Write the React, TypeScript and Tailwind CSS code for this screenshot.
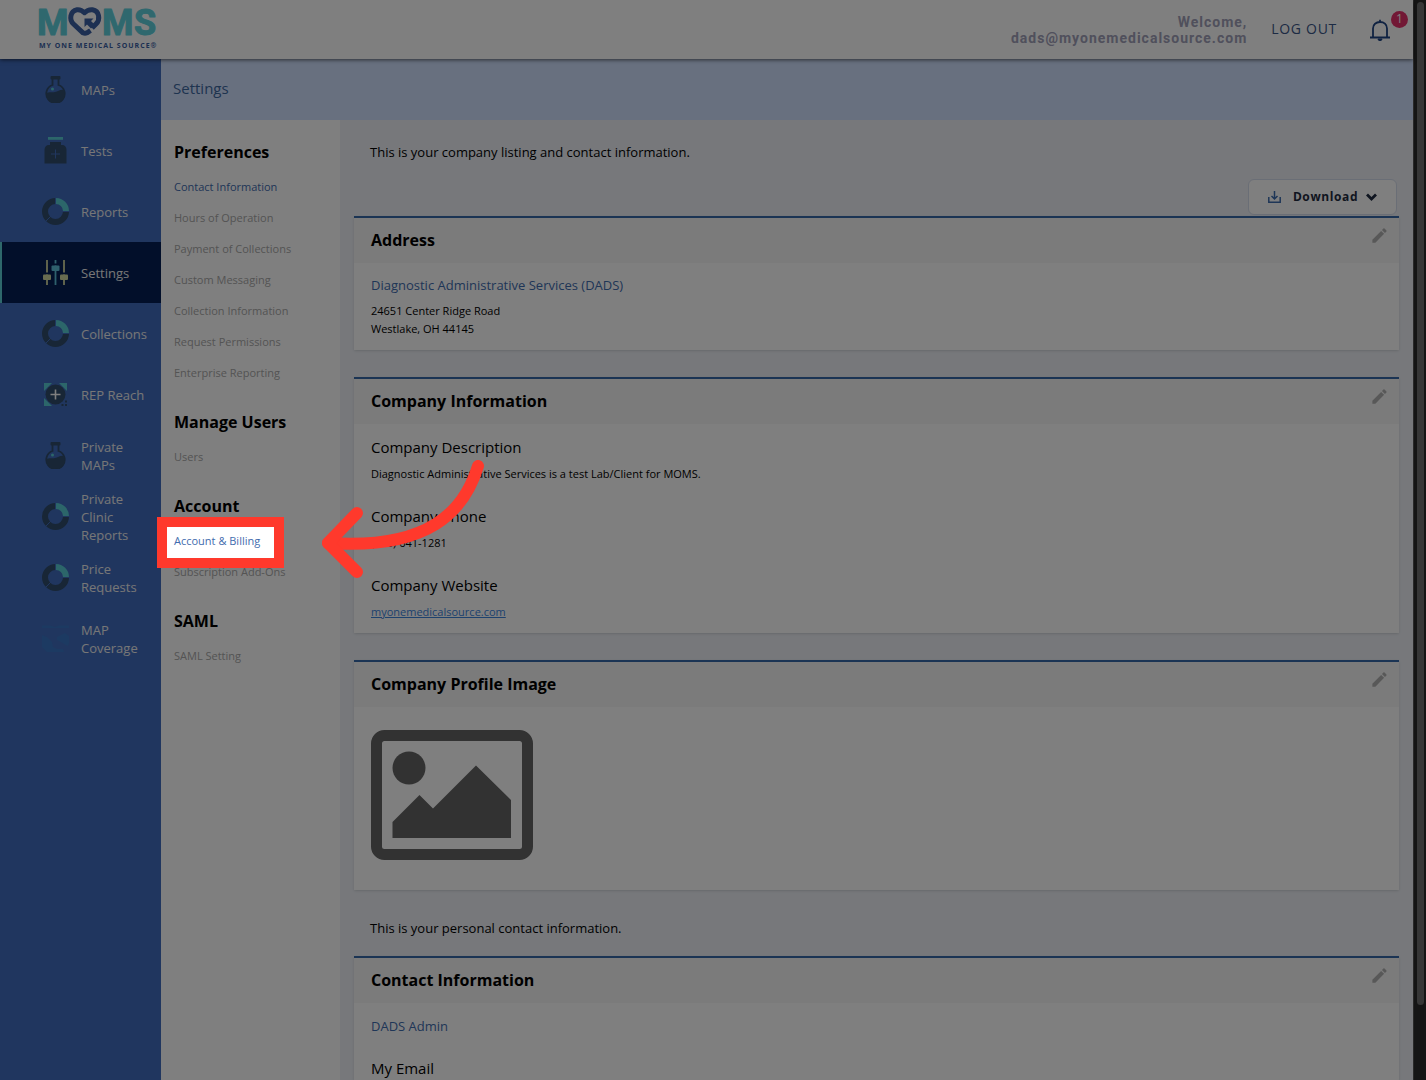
import React from "react";
import { clsx } from "clsx";
import { MdEdit } from "react-icons/md";

type IconName = "flask" | "bottle" | "donut" | "sliders" | "reach" | "map";

const sideItems: { label: string; icon: IconName; active?: boolean }[] = [
  { label: "MAPs", icon: "flask" },
  { label: "Tests", icon: "bottle" },
  { label: "Reports", icon: "donut" },
  { label: "Settings", icon: "sliders", active: true },
  { label: "Collections", icon: "donut" },
  { label: "REP Reach", icon: "reach" },
  { label: "Private MAPs", icon: "flask" },
  { label: "Private Clinic Reports", icon: "donut" },
  { label: "Price Requests", icon: "donut" },
  { label: "MAP Coverage", icon: "map" },
];

const menu = [
  {
    title: "Preferences",
    links: [
      "Contact Information",
      "Hours of Operation",
      "Payment of Collections",
      "Custom Messaging",
      "Collection Information",
      "Request Permissions",
      "Enterprise Reporting",
    ],
  },
  { title: "Manage Users", links: ["Users"] },
  { title: "Account", links: ["Account & Billing", "Subscription Add-Ons"] },
  { title: "SAML", links: ["SAML Setting"] },
];

export default function App() {
  return (
    <div className="flex h-screen overflow-hidden bg-white font-['Open_Sans','Noto_Sans',sans-serif] text-black">
      <div className="flex min-w-0 flex-1 flex-col">
        <Header />
        <div className="flex min-h-0 flex-1">
          <Sidebar />
          <div className="flex min-w-0 flex-1 flex-col">
            <div className="flex h-[61px] shrink-0 items-center bg-[#d1e1ff] px-3 pb-[2px]">
              <h1 className="text-[15px] text-[#3d689f]">Settings</h1>
            </div>
            <div className="flex min-h-0 flex-1">
              <SettingsMenu />
              <Content />
            </div>
          </div>
        </div>
      </div>
      {/* Scrollbar */}
      <div className="w-[13px] shrink-0 border-l border-[#555] bg-[#2a2a2a] pt-[2px]">
        <div className="ml-[3px] h-[93%] w-[7px] rounded-full bg-[#6e6e6e]" />
      </div>
    </div>
  );
}

function Header() {
  return (
    <header className="relative z-10 flex h-[59px] shrink-0 items-center justify-between bg-white pl-9 shadow-[0_1px_4px_rgba(0,0,0,0.6)]">
      <Logo />
      <div className="flex items-center">
        <p className="text-right font-['Roboto',sans-serif] text-sm leading-4 font-bold tracking-[1px] text-[#a0a0b8]">
          Welcome,
          <br />
          dads@myonemedicalsource.com
        </p>
        <button className="ml-6 pb-[2px] text-sm tracking-wider text-[#3a5688]">LOG OUT</button>
        <button className="relative mr-[22px] ml-8" aria-label="Notifications">
          <svg width="22" height="22" viewBox="0 0 22 22" fill="none" stroke="#1f4584" strokeWidth="1.800">
            <path d="M1 18.500h20M4 18V9.500C4 5.500 7 3 11 3s7 2.500 7 6.500V18" />
            <path d="M11 3V.8" />
            <path d="M9 20a2 1.600 0 0 0 4 0z" fill="#1f4584" strokeWidth="1" />
          </svg>
          <span className="absolute -top-2 left-[22px] flex size-[17px] items-center justify-center rounded-full bg-[#e4306a] text-xs text-white">
            1
          </span>
        </button>
      </div>
    </header>
  );
}

function Logo() {
  return (
    <svg width="128" height="59" viewBox="0 0 128 59" role="img" aria-label="MOMS">
      <g
        fill="#5ed0dc"
        stroke="#5ed0dc"
        strokeWidth="1"
        strokeLinejoin="round"
        fontFamily="Roboto, sans-serif"
        fontWeight="700"
        fontSize="36"
      >
        <text x="1" y="35">M</text>
        <text x="66" y="35">M</text>
        <text x="98" y="35">S</text>
      </g>
      <path
        d="M54.500 30.500l-3.500 2.300q-2 1-4 0L37.500 24C33 20 34 11 41 9.700c3.500-.4 5.500 1 7.500 3 2-2 4.500-3.400 8-3C63.500 11 64.500 19.500 60 24l-4 4"
        fill="none"
        stroke="#3a60a4"
        strokeWidth="5"
        strokeLinejoin="round"
      />
      <path d="M48.500 18.500h9l-2.500 2.500 4 4-4 3.500-4-4-2.500 2.500z" fill="#3a60a4" />
      <text x="3" y="48" fill="#3a60a4" fontFamily="Open Sans, sans-serif" fontWeight="700" fontSize="7" letterSpacing="1">
        MY ONE MEDICAL SOURCE®
      </text>
    </svg>
  );
}

function Sidebar() {
  return (
    <nav className="w-[161px] shrink-0 bg-[#406cbe]">
      {sideItems.map((item) => (
        <a
          key={item.label}
          href="#"
          className={clsx(
            "flex h-[61px] items-center gap-3 border-l-2 pr-2 pl-10 text-[13px] leading-[18px] text-[#eeeeee]",
            item.active ? "border-[#5cd0d6] bg-[#041e54]" : "border-transparent"
          )}
        >
          <SideIcon name={item.icon} />
          <span className="min-w-0 flex-1">{item.label}</span>
        </a>
      ))}
    </nav>
  );
}

function SideIcon({ name }: { name: IconName }) {
  const dark = "#304c6c";
  const teal = "#58ccd4";

  return (
    <svg className="size-[27px] shrink-0" viewBox="0 0 27 27" fill="none">
      {name === "flask" && (
        <>
          <path d="M10.500 2.500v6.500a9.200 9.200 0 1 0 6 0V2.500" stroke={dark} strokeWidth="1.800" />
          <rect x="8.500" y="0" width="10" height="3.500" rx="1" fill={dark} />
          <path d="M4 17c3-1.500 6-.5 9-1s5.500-3 9-2c2.500 8-2 13-8.500 13S4 22 4 17z" fill={dark} />
          <circle cx="10.500" cy="13" r="1.500" fill={teal} />
        </>
      )}
      {name === "bottle" && (
        <>
          <path d="M6 0h15v2.800H6z" fill={teal} />
          <path d="M8 5h11v3h1c3 0 4.500 2 4.500 5v13.500h-22V13c0-3 1.500-5 4.500-5h1z" fill={dark} />
          <path d="M13.500 12.500v9M9 17h9" stroke="#406cbe" strokeWidth="1" />
        </>
      )}
      {name === "donut" && (
        <>
          <circle cx="13.500" cy="13.500" r="10.500" stroke={dark} strokeWidth="6" />
          <path d="M13 14V0h14v14z" fill="#406cbe" />
          <path d="M14 3a10.200 10.200 0 0 1 10 10" stroke={teal} strokeWidth="6" />
          <path d="M9.500 17.500l-6 6" stroke="#406cbe" strokeWidth="1" />
        </>
      )}
      {name === "sliders" && (
        <>
          <path d="M5 1v25M22 1v25" stroke="#d0d8a0" strokeWidth="1.800" />
          <path d="M13.500 1v25" stroke="#5cc0da" strokeWidth="1.800" />
          <path d="M3 13.500h4v2H3zM20 13.500h4v2h-4zM11.500 4.500h4v2h-4z" fill="#041e54" />
          <rect x="1" y="15.500" width="8" height="5.500" rx="1" fill="#d0d8a0" />
          <rect x="18" y="15.500" width="8" height="5.500" rx="1" fill="#d0d8a0" />
          <rect x="9.500" y="6.500" width="8" height="5.500" rx="1" fill="#5cc0da" />
        </>
      )}
      {name === "reach" && (
        <>
          <path d="M2 2h8L2 10zM25 2h-8l8 8zM2 25h8l-8-8z" fill={teal} />
          <circle cx="13.500" cy="13.500" r="10" fill={dark} />
          <path d="M13.500 8.500v10M8.500 13.500h10" stroke="#fff" strokeWidth="1.600" />
          <path d="M23 20.500h2M19.500 24h2M23 24h2" stroke={dark} strokeWidth="2" />
        </>
      )}
      {name === "map" && (
        <path
          d="M0 .5h8l5 1.500 4-1.500h10V3H0zM15 12l8-4 4 3v7l-1 3-4-2-3-2-4-2zM0 10l5 2 5 5 1 5 4 2h6l1 3H5l-5-5z"
          fill="#3874c4"
        />
      )}
    </svg>
  );
}

function SettingsMenu() {
  return (
    <nav className="w-[179px] shrink-0 bg-white px-[13px]">
      {menu.map((section) => (
        <section key={section.title} className="pt-3 pb-[2px]">
          <h2 className="flex h-[39px] items-center text-base font-bold">{section.title}</h2>
          <ul>
            {section.links.map((link) => {
              const enabled = link === "Contact Information" || link === "Account & Billing";
              return (
                <li key={link} className="flex h-[31px] items-center">
                  <a
                    href="#"
                    className={clsx("relative text-[11px] leading-[31px] whitespace-nowrap", enabled ? "text-[#3f6cae]" : "text-[#a8a8a8]")}
                  >
                    {link}
                    {link === "Account & Billing" && <Spotlight />}
                  </a>
                </li>
              );
            })}
          </ul>
        </section>
      ))}
    </nav>
  );
}

// Dims everything outside the red frame and points an arrow at it
function Spotlight() {
  return (
    <>
      <span className="pointer-events-none absolute -top-2 -left-[17px] z-50 h-[51px] w-[127px] border-[10px] border-[#ff392c] shadow-[0_0_0_2000px_rgba(0,0,0,0.5)]" />
      <svg
        className="pointer-events-none absolute -top-[65px] left-[147px] z-50 max-w-none"
        width="164"
        height="120"
        viewBox="0 0 164 120"
        fill="none"
        stroke="#ff392c"
        strokeWidth="12"
        strokeLinecap="round"
        strokeLinejoin="round"
      >
        <path d="M157 6C143 52 107 90 7 83" />
        <path d="M36 53L7 83l29 29" />
      </svg>
    </>
  );
}

function Content() {
  return (
    <main className="min-w-0 flex-1 overflow-hidden bg-[#eef1f7] px-[14px]">
      <p className="px-4 pt-[22px] text-[13px] leading-5">This is your company listing and contact information.</p>
      <div className="flex justify-end pt-[17px] pr-[2px] pb-[1px]">
        <button className="flex h-9 w-[149px] items-center justify-center rounded-md border border-[#d5dcec] bg-white text-xs font-bold tracking-wider text-[#1f2b40]">
          <svg className="mr-3" width="13" height="12" viewBox="0 0 13 12" fill="none" stroke="#3d6cae" strokeWidth="1.500">
            <path d="M.8 6v5.200h11.400V6M6.500 0v7.500M3.500 5l3 3 3-3" />
          </svg>
          Download
          <svg className="ml-2" width="11" height="8" viewBox="0 0 11 8" fill="none" stroke="#1f2b40" strokeWidth="2.800">
            <path d="M1 1.500L5.500 6 10 1.500" />
          </svg>
        </button>
      </div>

      <div className="space-y-[27px]">
        <Card title="Address">
          <div className="pt-3 pb-3">
            <a href="#" className="block text-[13px] leading-5 text-[#3f6cae]">
              Diagnostic Administrative Services (DADS)
            </a>
            <p className="mt-[7px] text-[11px] leading-[18px]">
              24651 Center Ridge Road
              <br />
              Westlake, OH 44145
            </p>
          </div>
        </Card>

        <Card title="Company Information">
          <div className="space-y-5 py-[11px]">
            <Field label="Company Description">Diagnostic Administrative Services is a test Lab/Client for MOMS.</Field>
            <Field label="Company Phone">(216) 641-1281</Field>
            <Field label="Company Website">
              <a href="#" className="text-[#3c84dc] underline">
                myonemedicalsource.com
              </a>
            </Field>
          </div>
        </Card>

        <Card title="Company Profile Image">
          <div className="pt-[23px] pb-[30px]">
            <svg width="162" height="130" viewBox="0 0 162 130" fill="#646464">
              <rect x="5.500" y="5.500" width="151" height="119" rx="8" fill="none" stroke="#646464" strokeWidth="11" />
              <circle cx="38" cy="38" r="16.500" />
              <path d="M21.500 108V92L48.500 65 62 78.500 105 35.500 140 70v38z" />
            </svg>
          </div>
        </Card>
      </div>

      <p className="px-4 pt-7 pb-[18px] text-[13px] leading-5">This is your personal contact information.</p>

      <Card title="Contact Information">
        <div className="space-y-[18px] pt-[11px]">
          <a href="#" className="block text-[13px] leading-6 text-[#3f6cae]">
            DADS Admin
          </a>
          <Field label="My Email" />
        </div>
      </Card>
    </main>
  );
}

function Card({ title, children }: { title: string; children: React.ReactNode }) {
  return (
    <section className="border-t-2 border-[#3668a8] bg-white shadow-sm">
      <div className="flex h-[45px] items-center justify-between bg-[#f6f6f6] pr-[10px] pb-[2px] pl-[17px]">
        <h2 className="text-base font-bold">{title}</h2>
        <button aria-label={`Edit ${title}`} className="self-start pt-2">
          <MdEdit className="size-[19px] text-[#b0b0b0]" />
        </button>
      </div>
      <div className="px-[17px]">{children}</div>
    </section>
  );
}

function Field({ label, children }: { label: string; children?: React.ReactNode }) {
  return (
    <div>
      <h3 className="text-[15px] leading-6">{label}</h3>
      {children && <p className="mt-[5px] text-[11px] leading-5">{children}</p>}
    </div>
  );
}
